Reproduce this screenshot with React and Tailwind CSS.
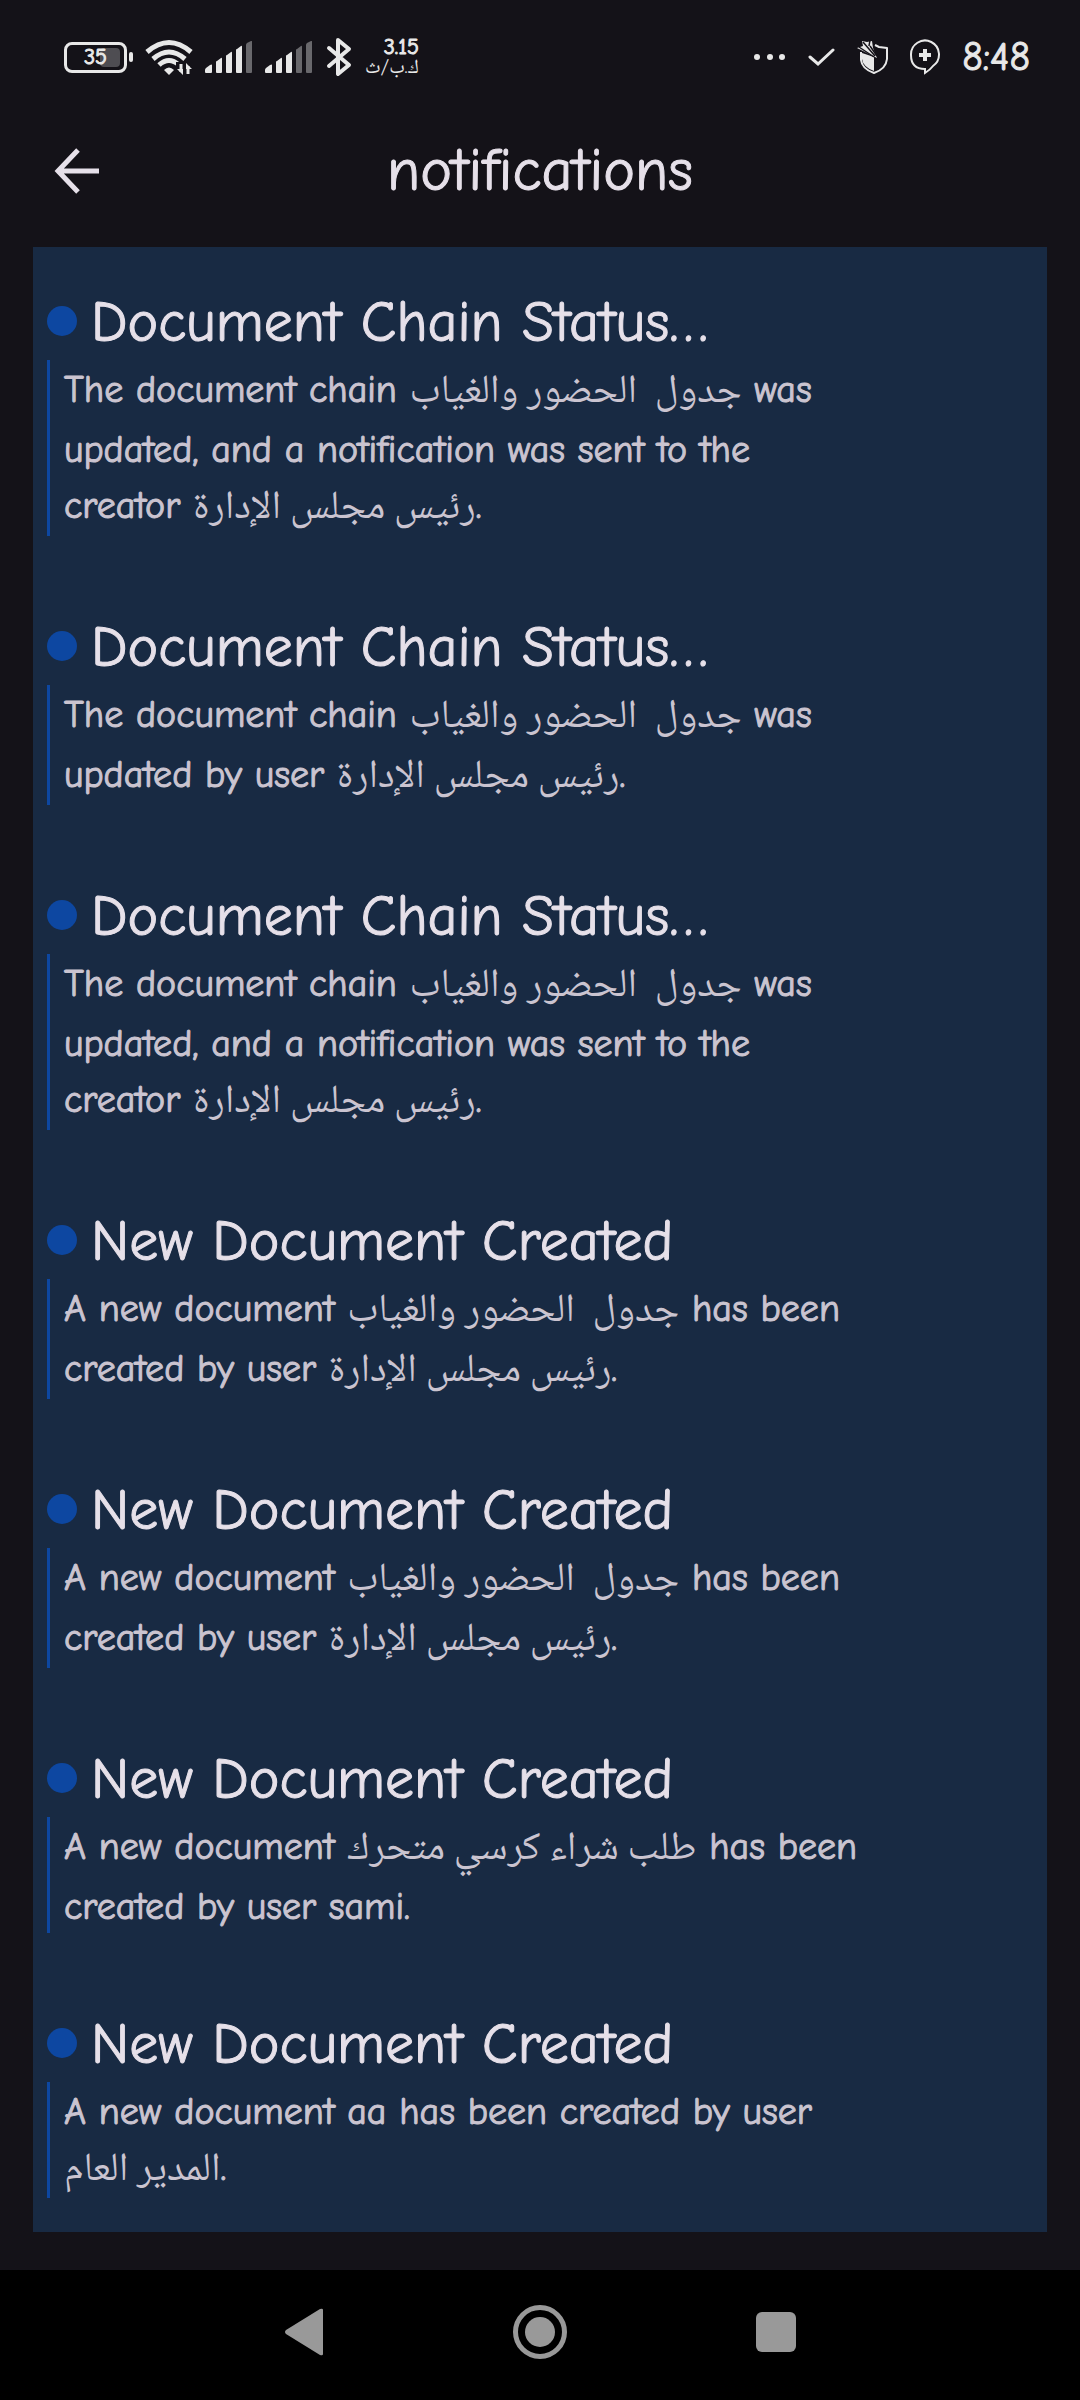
const DOC = "جدول  الحضور والغياب";
const CHAIR = "رئيس مجلس الإدارة";

const updatedAndSent = {
  title: "Document Chain Status…",
  lines: [
    { text: `The document chain ${DOC} was`, tall: true },
    { text: "updated, and a notification was sent to the" },
    { text: `creator ${CHAIR}.`, tall: true },
  ],
};

const createdByChair = {
  title: "New Document Created",
  lines: [
    { text: `A new document ${DOC} has been`, tall: true },
    { text: `created by user ${CHAIR}.`, tall: true },
  ],
};

const notifications = [
  updatedAndSent,
  {
    title: "Document Chain Status…",
    lines: [
      { text: `The document chain ${DOC} was`, tall: true },
      { text: `updated by user ${CHAIR}.`, tall: true },
    ],
  },
  updatedAndSent,
  createdByChair,
  createdByChair,
  {
    title: "New Document Created",
    lines: [
      { text: "A new document طلب شراء كرسي متحرك has been", tall: true },
      { text: "created by user sami." },
    ],
  },
  {
    title: "New Document Created",
    lines: [
      { text: "A new document aa has been created by user" },
      { text: "المدير العام.", tall: true },
    ],
  },
];

function Signal({ level }) {
  const bars = [
    "M0 31v-2q0-1 1-2l4-3q2-1 2 0v7q0 1-1 1H1q-1 0-1-1z",
    "M11 31V21q0-1 1-1l4-3q1-1 1 1v13q0 1-1 1h-4q-1 0-1-1z",
    "M21 31V15q0-1 1-1l4-3q1-1 1 1v19q0 1-1 1h-4q-1 0-1-1z",
    "M31 31V9q0-1 1-1l4-3q1-1 1 1v25q0 1-1 1h-4q-1 0-1-1z",
    "M41 31V4q0-1 1-2l4-2q1-1 1 1v30q0 1-1 1h-4q-1 0-1-1z",
  ];
  return (
    <svg className="h-8 w-12" viewBox="0 0 48 32" aria-hidden="true">
      {bars.map((d, i) => (
        <path key={d} d={d} fill={i < level ? "#e8e8e8" : "#69686c"} />
      ))}
    </svg>
  );
}

function Wifi() {
  return (
    <svg className="h-9 w-12" viewBox="0 0 48 36" fill="none" stroke="#e8e8e8" strokeWidth="5" aria-hidden="true">
      <path d="M2 13Q24-6 46 13" />
      <path d="M8 20Q24 6 40 20" />
      <path d="M14 26Q24 17 34 26" />
      <path d="M19 31q5-5 10 0l-5 5z" fill="#e8e8e8" stroke="none" />
      <path d="M31 23h17v13H31z" fill="#141218" stroke="none" />
      <path d="M36 25v8M43 27v8" strokeWidth="3" />
      <path d="M32 30h6v6zM41 30l0-6 6 6z" fill="#e8e8e8" stroke="none" />
    </svg>
  );
}

function StatusBar() {
  return (
    <div className="flex h-[114px] items-center justify-between pr-[50px] pl-16 text-[#e8e8e8]">
      <div className="flex items-center gap-3">
        <div className="flex items-center gap-0.5">
          <div className="relative flex h-[31px] w-[63px] items-center justify-center rounded-lg border-3 border-[#e8e8e8]">
            <span className="absolute top-[3px] right-1 bottom-[3px] w-5 rounded-sm bg-[#4e4d52]" />
            <span className="relative text-[22px] leading-6 [-webkit-text-stroke:1px]">35</span>
          </div>
          <span className="h-2.5 w-1 rounded-sm bg-[#e8e8e8]" />
        </div>
        <Wifi />
        <Signal level={4} />
        <Signal level={3} />
        <svg className="h-10 w-7" viewBox="0 0 28 40" fill="none" stroke="#e8e8e8" strokeWidth="4" strokeLinecap="round" strokeLinejoin="round" aria-hidden="true">
          <path d="M4 11l20 17-11 9V3l11 9L4 29" />
        </svg>
        <div className="flex flex-col items-end text-[20px] leading-5">
          <span className="text-[22px] [-webkit-text-stroke:1px]">3.15</span>
          <span dir="rtl">ك.ب/ث</span>
        </div>
      </div>
      <div className="flex items-center gap-[21px]">
        <svg className="h-2 w-8" viewBox="0 0 32 8" fill="#e8e8e8" aria-hidden="true">
          <circle cx="3" cy="4" r="3" />
          <circle cx="16" cy="4" r="3" />
          <circle cx="28" cy="4" r="3" />
        </svg>
        <svg className="h-5 w-7" viewBox="0 0 28 20" fill="none" stroke="#e8e8e8" strokeWidth="3" strokeLinecap="round" aria-hidden="true">
          <path d="M3 10l8 7L26 3" />
        </svg>
        <svg className="h-9 w-8" viewBox="0 0 32 36" fill="none" stroke="#e8e8e8" strokeWidth="2" strokeLinejoin="round" aria-hidden="true">
          <path d="M5 13v8q1 9 13 13 12-4 13-14V9l-8-1-4-2" />
          <path d="M6 14l12 4v14Q7 28 6 20z" fill="#e8e8e8" stroke="none" />
          <path d="M1 9l6-2-1-5 5 1 5-1 1 7 4 10z" fill="#e8e8e8" stroke="none" />
          <path d="M7 3l12 14M14 1l-1 6M3 8l15 10M14 7l7 10" stroke="#141218" strokeWidth="1.5" />
        </svg>
        <svg className="h-9 w-8" viewBox="0 0 32 36" fill="none" stroke="#e8e8e8" strokeWidth="2" aria-hidden="true">
          <path d="M16 34v-4Q2 30 2 16a14 14 0 1 1 22 11q-3 4-8 7z" />
          <path d="M16 10v12M10 16h12" strokeWidth="4" />
        </svg>
        <time className="text-[40px] leading-10 [-webkit-text-stroke:1px]">8:48</time>
      </div>
    </div>
  );
}

const ARABIC_RUN = /([\u0600-\u06ff]+(?:\s+[\u0600-\u06ff]+)*)/;

function MixedText({ text }) {
  return text.split(ARABIC_RUN).map((part, i) =>
    i % 2 ? (
      <span key={i} lang="ar" className="font-['Noto_Naskh_Arabic','DejaVu_Sans',sans-serif] text-[40px] [-webkit-text-stroke:0]">
        {part}
      </span>
    ) : (
      part
    ),
  );
}

function Notification({ title, lines }) {
  return (
    <li>
      <h2 className="flex h-[78px] items-center gap-[14px] text-[58px] leading-[78px] text-[#e6e0e9] [-webkit-text-stroke:1px]">
        <span className="size-[30px] shrink-0 rounded-full bg-[#0d47a1]" />
        <span className="truncate pt-1">{title}</span>
      </h2>
      <p className="border-l-3 border-[#0d47a1] pl-[14px] text-[38px] leading-[60px] whitespace-pre text-[#cac4d0] [-webkit-text-stroke:1px]">
        {lines.map(({ text, tall }) => (
          <span key={text} className={tall ? "block h-[60px]" : "block h-14"}>
            <MixedText text={text} />
          </span>
        ))}
      </p>
    </li>
  );
}

export default function App() {
  return (
    <div className="flex min-h-screen flex-col bg-[#141218] font-['Comic_Neue','Noto_Naskh_Arabic',Lato,sans-serif]">
      <StatusBar />
      <header className="grid h-[133px] grid-cols-[1fr_auto_1fr] items-center px-[54px] pb-5 text-[#e6e0e9]">
        <button type="button" aria-label="Back" className="w-12">
          <svg className="h-12 w-12" viewBox="0 0 48 48" fill="none" stroke="currentColor" strokeWidth="5" aria-hidden="true">
            <path d="M24 3L4 24l20 21M4 24h41" />
          </svg>
        </button>
        <h1 className="text-[60px] leading-[78px] [-webkit-text-stroke:1px]">notifications</h1>
      </header>
      <main className="mr-[33px] mb-[38px] ml-[33px] flex-1 bg-[#182a43] px-[14px] pt-[35px] pb-[34px]">
        <ul className="flex flex-col gap-[71px]">
          {notifications.map((item, i) => (
            <Notification key={i} {...item} />
          ))}
        </ul>
      </main>
      <nav className="flex h-[130px] items-center justify-center gap-[180px] bg-black pb-1.5">
        <button type="button" aria-label="Back">
          <svg className="size-14" viewBox="0 0 56 56" fill="#999" aria-hidden="true">
            <path d="M10 26L44 5q3-1 3 1v44q0 2-3 1L10 30q-2-2 0-4z" />
          </svg>
        </button>
        <button type="button" aria-label="Home">
          <svg className="size-14" viewBox="0 0 56 56" aria-hidden="true">
            <circle cx="28" cy="28" r="24.5" fill="none" stroke="#999" strokeWidth="5" />
            <circle cx="28" cy="28" r="15" fill="#999" />
          </svg>
        </button>
        <button type="button" aria-label="Recent apps">
          <svg className="size-14" viewBox="0 0 56 56" fill="#999" aria-hidden="true">
            <rect x="8" y="8" width="40" height="40" rx="6" />
          </svg>
        </button>
      </nav>
    </div>
  );
}
